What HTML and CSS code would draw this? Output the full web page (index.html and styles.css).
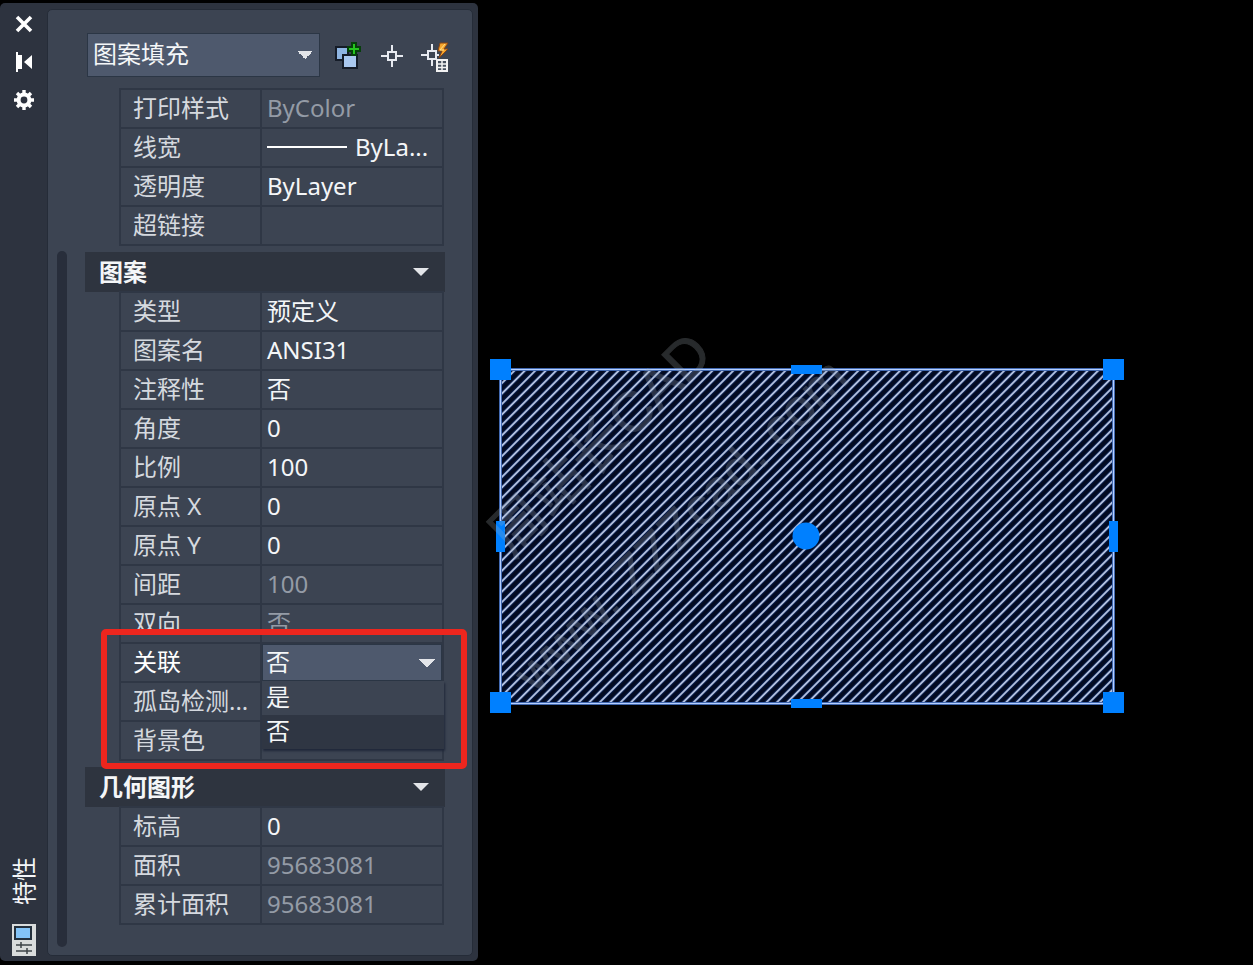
FILE: index.html
```
<!DOCTYPE html>
<html lang="zh-CN">
<head>
<meta charset="utf-8">
<meta name="viewport" content="width=device-width, initial-scale=1">
<title>特性</title>
<link rel="stylesheet" href="styles.css">
</head>
<body>
<main class="workspace">
  <aside class="palette" aria-label="特性">
    <div class="rail">
      <div class="rail-tools">
        <button class="icon-btn" type="button" aria-label="关闭"><svg width="24" height="24" viewBox="0 0 24 24"><path d="M5 5l14 14M19 5L5 19" stroke="#fff" stroke-width="3.6"/></svg></button>
        <button class="icon-btn" type="button" aria-label="自动隐藏"><svg width="24" height="24" viewBox="0 0 24 24"><path d="M4 2h2v3h4v14H6v3H4zM20 5v14l-8-7z" fill="#fff"/></svg></button>
        <button class="icon-btn" type="button" aria-label="设置"><svg width="24" height="24" viewBox="0 0 24 24" fill="none" stroke="#fff"><circle cx="12" cy="12" r="5.4" stroke-width="4"/><path d="M12 2v4M12 18v4M2 12h4M18 12h4M5 5l3 3M16 16l3 3M19 5l-3 3M8 16l-3 3" stroke-width="3.4"/></svg></button>
      </div>
      <div class="rail-foot">
        <span class="rail-title">特性</span>
        <svg width="24" height="32" viewBox="0 0 24 32"><path fill="#d9dcdc" d="M0 0h24v32H0z"/><path fill="#83c3f7" stroke="#24303c" stroke-width="2" d="M3 3h16v12H3z"/><path d="M4 21h16M4 27h16M9 18v6M15 24v6" stroke="#3d4347" stroke-width="1.5"/></svg>
      </div>
    </div>
    <div class="panel">
      <div class="scroll-track"></div>
      <div class="content">
        <div class="toolbar">
          <select class="object-select" aria-label="对象类型"><option>图案填充</option></select>
          <div class="tools">
            <button class="icon-btn" type="button" aria-label="切换添加选择"><svg width="30" height="32" viewBox="0 0 30 32"><path d="M2 7h12v13H2z" fill="#8fb5e2" stroke="#151c28" stroke-width="2"/><path d="M9 15h14v13H9z" fill="#a9c8ef" stroke="#151c28" stroke-width="2"/><path d="M18 3h4v4h4v4h-4v4h-4v-4h-4V7h4z" fill="#25c61f" stroke="#063f0b" stroke-width="2"/></svg></button>
            <button class="icon-btn" type="button" aria-label="选择对象"><svg width="24" height="32" viewBox="0 0 24 32" fill="none" stroke="#e7eaf0" stroke-width="2"><path d="M8 12h8v8H8zM12 5v7M12 20v7M1 16h7M16 16h7"/></svg></button>
            <button class="icon-btn" type="button" aria-label="快速选择"><svg width="30" height="34" viewBox="0 0 30 34" fill="none"><path d="M8 12h8v8H8zM12 5v7M12 20v7M1 16h7M16 16h3" stroke="#e7eaf0" stroke-width="2"/><path d="M20 4h8l-4 6h4l-9 9 3-7h-4z" fill="#f6a52c" stroke="#884616"/><path d="M25 5l-5 6h4" stroke="#ffe18a"/><path d="M17 21h10v11H17z" fill="#46505e" stroke="#f2f2f2" stroke-width="2"/><path d="M17 25h10M17 28.500h10M22 21v11" stroke="#f2f2f2" stroke-width="1.5"/></svg></button>
          </div>
        </div>

        <table class="props props-first">
          <tr><th scope="row">打印样式</th><td class="muted">ByColor</td></tr>
          <tr><th scope="row">线宽</th><td><span class="weight"><span class="weight-line"></span>ByLa...</span></td></tr>
          <tr><th scope="row">透明度</th><td>ByLayer</td></tr>
          <tr><th scope="row">超链接</th><td></td></tr>
        </table>

        <button class="section" type="button">图案<span class="caret"></span></button>
        <table class="props">
          <tr><th scope="row">类型</th><td>预定义</td></tr>
          <tr><th scope="row">图案名</th><td>ANSI31</td></tr>
          <tr><th scope="row">注释性</th><td>否</td></tr>
          <tr><th scope="row">角度</th><td>0</td></tr>
          <tr><th scope="row">比例</th><td>100</td></tr>
          <tr><th scope="row">原点 X</th><td>0</td></tr>
          <tr><th scope="row">原点 Y</th><td>0</td></tr>
          <tr><th scope="row">间距</th><td class="muted">100</td></tr>
          <tr><th scope="row">双向</th><td class="muted">否</td></tr>
          <tr class="active">
            <th scope="row"><label for="assoc">关联</label></th>
            <td class="editor">
              <select class="assoc-select" id="assoc"><option>否</option><option>是</option></select>
              <ul class="menu"><li>是</li><li class="current">否</li></ul>
              <div class="highlight"></div>
            </td>
          </tr>
          <tr><th scope="row">孤岛检测...</th><td></td></tr>
          <tr><th scope="row">背景色</th><td></td></tr>
        </table>

        <button class="section" type="button">几何图形<span class="caret"></span></button>
        <table class="props">
          <tr><th scope="row">标高</th><td>0</td></tr>
          <tr><th scope="row">面积</th><td class="muted">95683081</td></tr>
          <tr><th scope="row">累计面积</th><td class="muted">95683081</td></tr>
        </table>
      </div>
    </div>
  </aside>

  <section class="canvas" aria-label="绘图区">
    <svg class="drawing" width="775" height="965" viewBox="478 0 775 965">
      <defs>
        <pattern id="hatch" width="40" height="7.37" patternUnits="userSpaceOnUse" patternTransform="translate(500 703) rotate(-45)">
          <path fill="#020a22" d="M0 0h40v7.37H0z"/>
          <path d="M0 3.7h40" stroke="#15377c" stroke-width="2.8"/>
          <path d="M0 3.7h40" stroke="#e6edff" stroke-width="1.300"/>
        </pattern>
      </defs>
      <path d="M500.500 369.500h613v334h-613z" fill="url(#hatch)" stroke="#1c4796" stroke-width="3"/>
      <path d="M500.500 369.500h613v334h-613z" fill="none" stroke="#b5cfff" stroke-width="1.5"/>
      <g fill="#0080ff">
        <path d="M490 359h21v21h-21zM1103 359h21v21h-21zM490 692h21v21h-21zM1103 692h21v21h-21z"/>
        <path d="M791 365h31v9h-31zM791 699h31v9h-31zM496 521h9v31h-9zM1109 521h9v31h-9z"/>
        <circle cx="806" cy="536" r="13.500"/>
      </g>
      <g class="watermark">
        <text class="watermark-name" transform="translate(512 559) rotate(-45)">周站长CAD</text>
        <text transform="translate(536 695) rotate(-45)">www. ZZZcad. com</text>
      </g>
    </svg>
  </section>
</main>
</body>
</html>
```
FILE: styles.css
```
* { box-sizing: border-box; }

body {
  margin: 0;
  background: #000;
  color: #f4f6f8;
  font: 24px/32px "Noto Sans", "Noto Sans CJK SC", sans-serif;
}

button, select { font: inherit; color: inherit; border-radius: 0; margin: 0; }

.workspace { display: flex; min-height: 100vh; overflow: hidden; }

.palette {
  display: flex;
  flex: none;
  width: 478px;
  margin: 3px 0 4px;
  padding: 6px 5px 5px 0;
  background: #2d333f;
  border-radius: 5px;
}

.rail {
  display: flex;
  flex: none;
  flex-direction: column;
  justify-content: space-between;
  align-items: center;
  width: 47px;
}

.rail-tools { display: flex; flex-direction: column; gap: 14px; padding-top: 3px; }
.rail-foot { display: flex; flex-direction: column; align-items: center; gap: 19px; }
.rail-title { writing-mode: vertical-rl; text-orientation: sideways; transform: rotate(180deg); }

.icon-btn { display: block; padding: 0; border: 0; background: none; }
.icon-btn svg, .rail-foot svg { display: block; }

.panel {
  display: flex;
  flex: 1;
  min-width: 0;
  padding: 0 27px 8px 9px;
  background: #3c4452;
  border: 1px solid #252c38;
  border-radius: 5px;
}

.scroll-track { flex: none; width: 10px; margin-top: 241px; border-radius: 5px; background: #282e3b; }
.content { flex: 1; min-width: 0; margin-left: 18px; }

.toolbar { display: flex; padding: 23px 0 0 2px; }
.tools { display: flex; flex: none; gap: 16px; margin-left: 14px; padding-top: 4px; margin-top: -3px; }

select {
  appearance: none;
  border: 1px solid #2b3645;
  outline: 0;
  background-color: #4e596d;
  background-image: conic-gradient(from 315deg at 50% 100%, #e3e5e9 90deg, transparent 0);
  background-repeat: no-repeat;
  background-position: right 6px center;
  background-size: 16px 8px;
}

.object-select { flex: none; width: 233px; height: 44px; padding: 0 5px 2px; }

.props {
  width: 325px;
  margin: -1px 0 0 34px;
  border-collapse: collapse;
  table-layout: fixed;
}
.props-first { margin-top: 11px; }
.props tr { height: 39px; }
.props th, .props td { padding: 0 0 2px 5px; border: 2px solid #2f3745; }
.props th { width: 141px; padding-left: 12px; font-weight: 400; text-align: left; white-space: nowrap; color: #d5d9df; }
.props .muted { color: #949ba6; }
.props .active th { color: #fff; }

.weight { display: flex; align-items: center; gap: 8px; }
.weight-line { width: 80px; height: 2px; background: #fff; }

.section {
  display: flex;
  justify-content: space-between;
  align-items: center;
  width: 100%;
  height: 40px;
  margin-top: 6px;
  padding: 0 16px 0 14px;
  border: 0;
  background: #2e343f;
  font-weight: 700;
}

.caret { width: 16px; height: 8px; background: #e3e5e9; clip-path: polygon(0 0, 100% 0, 50% 100%); }

.props .editor { position: relative; padding: 0; }
.assoc-select { display: block; width: 100%; height: 37px; padding: 0 3px 2px; }

.menu {
  position: absolute;
  z-index: 1;
  top: 37px;
  left: 0;
  right: -2px;
  margin: 0;
  padding: 0;
  list-style: none;
  background: #3c4452;
  box-shadow: 1px 2px 2px #20283a;
}
.menu li { height: 34px; padding-left: 4px; }
.menu .current { background: #2f3643; }

.highlight {
  position: absolute;
  z-index: 2;
  top: -15px;
  left: -161px;
  right: -25px;
  height: 140px;
  border: 6px solid #ed261e;
  border-radius: 5px;
  pointer-events: none;
}

.canvas { flex: 1; min-width: 0; }
.drawing { display: block; }
.watermark {
  fill: #a5afb8;
  stroke: #a5afb8;
  stroke-width: 1px;
  opacity: .24;
  font-size: 52px;
  font-family: "Liberation Sans", "Noto Sans CJK SC", sans-serif;
}
.watermark-name { font-size: 56px; }
```
